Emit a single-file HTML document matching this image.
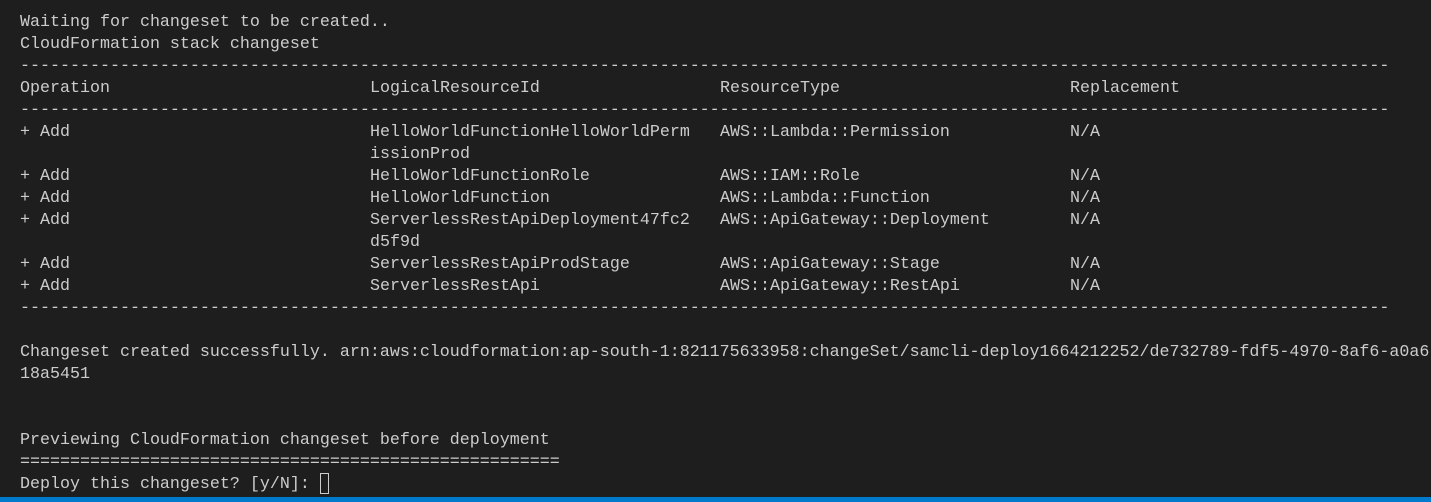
<!DOCTYPE html>
<html><head><style>
html,body{margin:0;padding:0;background:#1e1e1e;width:1431px;height:502px;overflow:hidden}
.t{position:absolute;left:0;top:12px;width:1431px;font-family:"Liberation Mono","DejaVu Sans Mono",monospace;font-size:16.667px;color:#cccccc}
.l{position:relative;height:22px;line-height:22px;white-space:pre}
.l span{position:absolute;top:0}
.a{left:20px}.b{left:370px}.c{left:720px}.d{left:1070px}
.dash{position:absolute;left:20px;width:1370px;overflow:hidden}
.cur{position:absolute;left:320px;top:473px;width:9px;height:21px;border:1px solid #cccccc;box-sizing:border-box}
.bar{position:absolute;left:0;top:497px;width:1431px;height:5px;background:#007acc}
</style></head><body>
<div class="t">
<div class="l"><span class="a">Waiting for changeset to be created..</span></div>
<div class="l"><span class="a">CloudFormation stack changeset</span></div>
<div class="l"><span class="dash">-----------------------------------------------------------------------------------------------------------------------------------------</span></div>
<div class="l"><span class="a">Operation</span><span class="b">LogicalResourceId</span><span class="c">ResourceType</span><span class="d">Replacement</span></div>
<div class="l"><span class="dash">-----------------------------------------------------------------------------------------------------------------------------------------</span></div>
<div class="l"><span class="a">+ Add</span><span class="b">HelloWorldFunctionHelloWorldPerm</span><span class="c">AWS::Lambda::Permission</span><span class="d">N/A</span></div>
<div class="l"><span class="b">issionProd</span></div>
<div class="l"><span class="a">+ Add</span><span class="b">HelloWorldFunctionRole</span><span class="c">AWS::IAM::Role</span><span class="d">N/A</span></div>
<div class="l"><span class="a">+ Add</span><span class="b">HelloWorldFunction</span><span class="c">AWS::Lambda::Function</span><span class="d">N/A</span></div>
<div class="l"><span class="a">+ Add</span><span class="b">ServerlessRestApiDeployment47fc2</span><span class="c">AWS::ApiGateway::Deployment</span><span class="d">N/A</span></div>
<div class="l"><span class="b">d5f9d</span></div>
<div class="l"><span class="a">+ Add</span><span class="b">ServerlessRestApiProdStage</span><span class="c">AWS::ApiGateway::Stage</span><span class="d">N/A</span></div>
<div class="l"><span class="a">+ Add</span><span class="b">ServerlessRestApi</span><span class="c">AWS::ApiGateway::RestApi</span><span class="d">N/A</span></div>
<div class="l"><span class="dash">-----------------------------------------------------------------------------------------------------------------------------------------</span></div>
<div class="l"></div>
<div class="l"><span class="a">Changeset created successfully. arn:aws:cloudformation:ap-south-1:821175633958:changeSet/samcli-deploy1664212252/de732789-fdf5-4970-8af6-a0a6</span></div>
<div class="l"><span class="a">18a5451</span></div>
<div class="l"></div>
<div class="l"></div>
<div class="l"><span class="a">Previewing CloudFormation changeset before deployment</span></div>
<div class="l"><span class="a">======================================================</span></div>
<div class="l"><span class="a">Deploy this changeset? [y/N]: </span></div>
</div>
<div class="cur"></div>
<div class="bar"></div>
</body></html>
